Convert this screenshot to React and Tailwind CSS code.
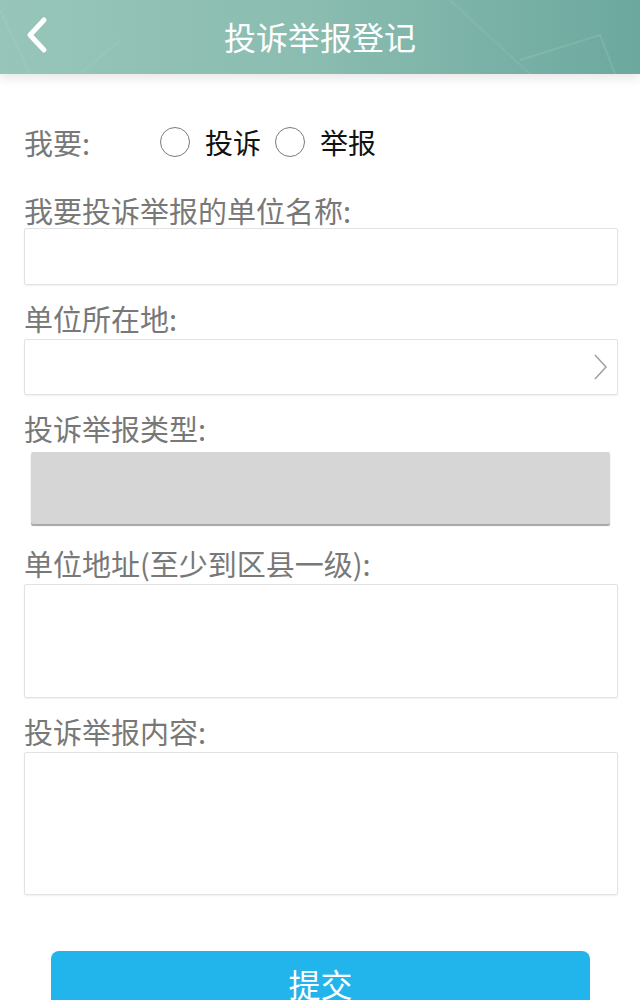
import React, { useState } from "react";

// Font stack for all Chinese text
const font = { fontFamily: '"Noto Sans CJK SC", "Noto Sans", sans-serif' };

// Round radio used in the "我要" row
function Radio({ checked, onClick, label }) {
  return (
    <button type="button" onClick={onClick} className="flex items-center">
      <span className="w-[30px] h-[30px] rounded-full border-[1.5px] border-[#7a7a7a] flex items-center justify-center">
        {checked && <span className="w-[16px] h-[16px] rounded-full bg-[#21b5ec]" />}
      </span>
      <span className="ml-[15px] text-[28px] leading-[36px] text-[#111]">{label}</span>
    </button>
  );
}

function Label({ children, className = "" }) {
  return (
    <div className={"text-[29px] leading-[36px] text-[#787878] " + className}>{children}</div>
  );
}

export default function App() {
  const [kind, setKind] = useState(null);

  return (
    <div className="min-h-screen bg-white" style={font}>
      {/* Header bar */}
      <div className="relative h-[74px] bg-gradient-to-r from-[#97c5b9] via-[#8abcb0] to-[#6ca89e] flex items-center justify-center shadow-[0_4px_10px_rgba(0,0,0,0.1)] overflow-hidden">
        <svg className="absolute inset-0" width="640" height="74" viewBox="0 0 640 74">
          <path d="M450 0 L530 74" stroke="#ffffff" strokeOpacity="0.07" strokeWidth="2" fill="none" />
          <path d="M520 60 L600 35 L615 74" stroke="#ffffff" strokeOpacity="0.1" strokeWidth="2" fill="none" />
          <path d="M0 10 L30 74" stroke="#ffffff" strokeOpacity="0.06" strokeWidth="2" fill="none" />
          <path d="M80 74 L120 40" stroke="#ffffff" strokeOpacity="0.05" strokeWidth="2" fill="none" />
        </svg>
        <svg className="absolute left-[22px] top-[16px]" width="30" height="38" viewBox="0 0 30 38">
          <polyline points="22,4 8,19 22,34" fill="none" stroke="#ffffff" strokeWidth="5" strokeLinecap="round" strokeLinejoin="round" />
        </svg>
        <h1 className="relative -mt-[3px] text-[32px] text-white leading-none">投诉举报登记</h1>
      </div>

      <div className="pl-[24px] pr-[22px] pt-[50px]">
        {/* 我要 row */}
        <div className="flex items-center h-[36px]">
          <Label className="w-[136px]">我要:</Label>
          <Radio checked={kind === "a"} onClick={() => setKind("a")} label="投诉" />
          <div className="w-[14px]" />
          <Radio checked={kind === "b"} onClick={() => setKind("b")} label="举报" />
        </div>

        <Label className="mt-[32px]">我要投诉举报的单位名称:</Label>
        <input className="block w-full h-[57px] border border-[#e2e2e2] rounded-[2px] shadow-[0_1px_2px_rgba(0,0,0,0.06)] px-3 text-[24px] outline-none" />

        <Label className="mt-[15px]">单位所在地:</Label>
        <div className="mt-[3px] h-[56px] border border-[#e2e2e2] rounded-[2px] shadow-[0_1px_2px_rgba(0,0,0,0.06)] flex items-center justify-end pr-[8px]">
          <svg width="16" height="28" viewBox="0 0 16 28">
            <polyline points="2,2 13,14 2,26" fill="none" stroke="#a0a0a0" strokeWidth="1.5" />
          </svg>
        </div>

        <Label className="mt-[15px]">投诉举报类型:</Label>
        <div className="mt-[6px] ml-[7px] mr-[8px] h-[72px] bg-[#d6d6d6] rounded-[2px] shadow-[0_2px_1px_rgba(0,0,0,0.35)]" />

        <Label className="mt-[21px]">单位地址(至少到区县一级):</Label>
        <textarea className="block mt-[3px] w-full h-[114px] border border-[#e2e2e2] rounded-[2px] shadow-[0_1px_2px_rgba(0,0,0,0.06)] resize-none outline-none p-2 text-[24px]" />

        <Label className="mt-[15px]">投诉举报内容:</Label>
        <textarea className="block mt-[3px] w-full h-[143px] border border-[#e2e2e2] rounded-[2px] shadow-[0_1px_2px_rgba(0,0,0,0.06)] resize-none outline-none p-2 text-[24px]" />

        <div className="mt-[56px] pl-[27px] pr-[28px] pb-6">
          <button className="w-full h-[64px] rounded-[8px] bg-[#21b5ec] text-white text-[32px] leading-none">
            提交
          </button>
        </div>
      </div>
    </div>
  );
}
